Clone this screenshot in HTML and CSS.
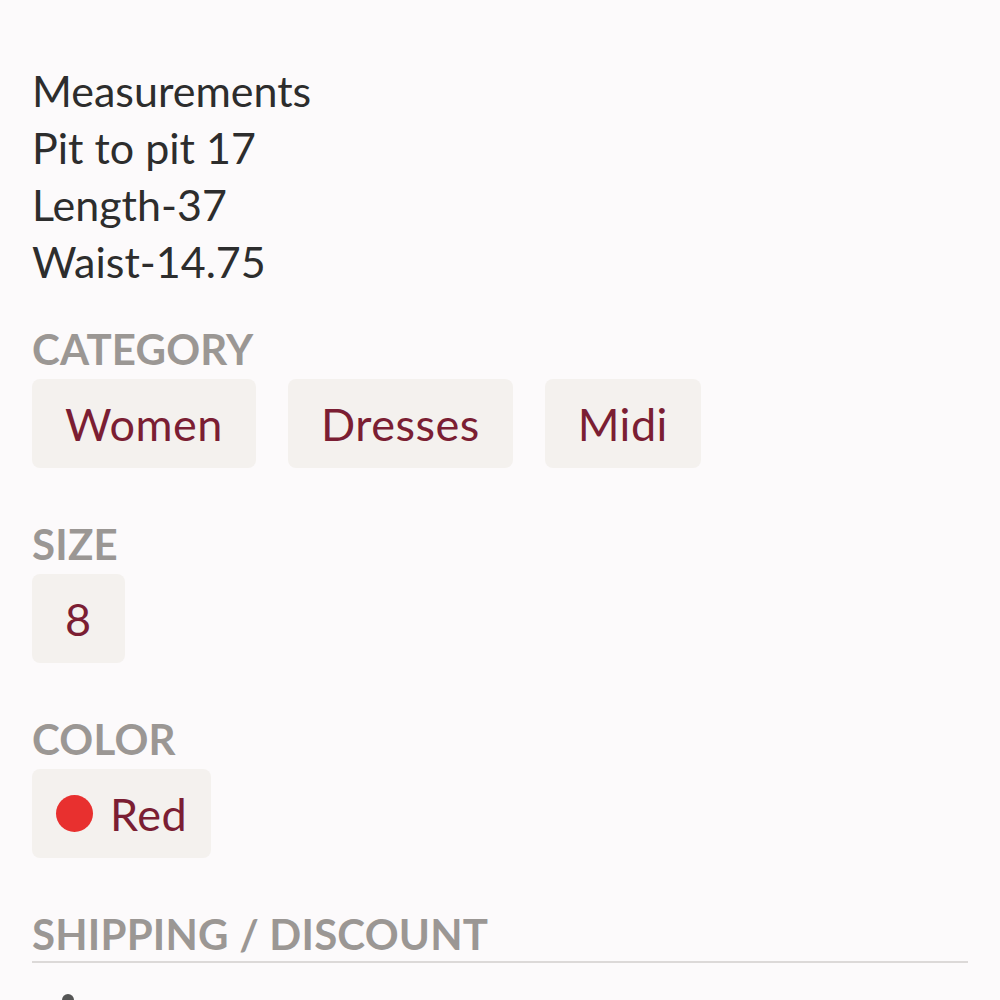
FILE: index.html
```html
<!DOCTYPE html>
<html lang="en">
<head>
<meta charset="UTF-8">
<meta name="viewport" content="width=device-width, initial-scale=1.0">
<title>Listing details</title>
<link rel="stylesheet" href="styles.css">
</head>
<body>
<div class="details">
<p class="description">Measurements<br>Pit to pit 17<br>Length-37<br>Waist-14.75</p>

<h3 class="label">Category</h3>
<div class="chips">
<a class="chip" href="#">Women</a>
<a class="chip" href="#">Dresses</a>
<a class="chip" href="#">Midi</a>
</div>

<h3 class="label">Size</h3>
<div class="chips">
<a class="chip" href="#">8</a>
</div>

<h3 class="label">Color</h3>
<div class="chips">
<a class="chip chip-color" href="#"><span class="swatch"></span>Red</a>
</div>

<h3 class="label label-ruled">Shipping / Discount</h3>
<div class="shipping-row">
<span class="ship-icon"></span>
</div>
</div>
</body>
</html>
```

FILE: styles.css
```css
body {
  margin: 0;
  background-color: #fcfafb;
  font-family: 'Lato', 'Noto Sans', sans-serif;
  color: #333;
}

.details {
  padding: 62px 32px 0;
}

.description {
  margin: 0;
  font-size: 43px;
  line-height: 57px;
  color: #2d2d2d;
}

.label {
  margin: 34px 0 5px;
  font-size: 42px;
  line-height: 50px;
  font-weight: 700;
  letter-spacing: 0.2px;
  color: #9b9794;
  text-transform: uppercase;
}

.chips + .label {
  margin-top: 51px;
}

.chips {
  display: flex;
  gap: 32px;
}

.chip {
  display: flex;
  align-items: center;
  height: 89px;
  padding: 0 33px;
  background-color: #f4f1ee;
  border-radius: 8px;
  font-size: 45px;
  letter-spacing: 0.5px;
  color: #7b1e33;
  text-decoration: none;
}

.chip-color {
  padding: 0 24px;
}

.swatch {
  width: 37px;
  height: 37px;
  margin-right: 17px;
  border-radius: 50%;
  background-color: #e8302f;
}

.label-ruled {
  padding-bottom: 2px;
  border-bottom: 2px solid #dcd9d8;
}

.shipping-row {
  padding: 26px 30px 0;
}

.ship-icon {
  display: block;
  width: 12px;
  height: 12px;
  border-radius: 50%;
  background-color: #555;
}
```
